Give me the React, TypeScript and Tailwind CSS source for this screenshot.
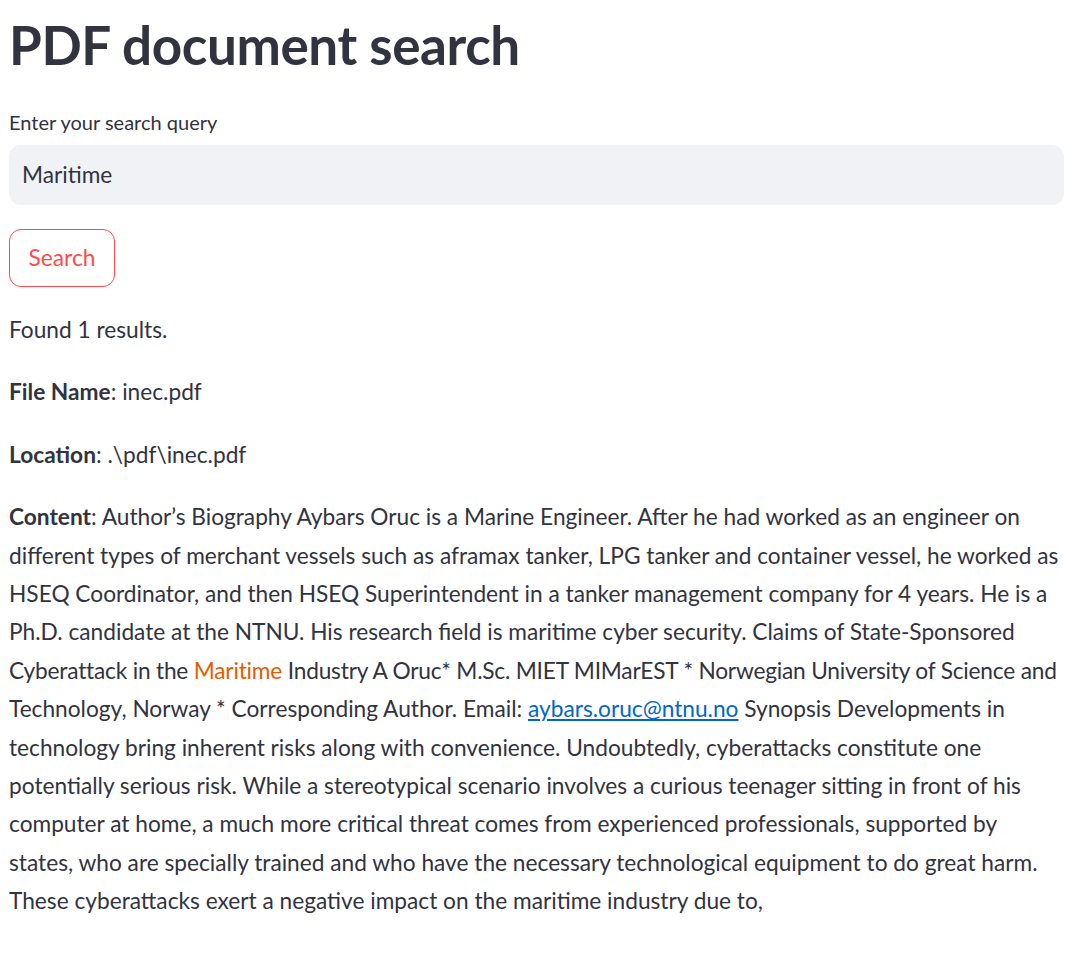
import React from 'react';

const lines: React.ReactNode[] = [
  <><b className="font-bold">Content</b>: Author’s Biography Aybars Oruc is a Marine Engineer. After he had worked as an engineer on</>,
  <>different types of merchant vessels such as aframax tanker, LPG tanker and container vessel, he worked as</>,
  <>HSEQ Coordinator, and then HSEQ Superintendent in a tanker management company for 4 years. He is a</>,
  <>Ph.D. candidate at the NTNU. His research field is maritime cyber security. Claims of State-Sponsored</>,
  <span className="tracking-[-0.2px]">Cyberattack in the <span className="text-[#e65c00]">Maritime</span> Industry A Oruc* M.Sc. MIET MIMarEST * Norwegian University of Science and</span>,
  <>Technology, Norway * Corresponding Author. Email: <a href="#" className="text-[#0068c9] underline">aybars.oruc@ntnu.no</a> Synopsis Developments in</>,
  <>technology bring inherent risks along with convenience. Undoubtedly, cyberattacks constitute one</>,
  <>potentially serious risk. While a stereotypical scenario involves a curious teenager sitting in front of his</>,
  <>computer at home, a much more critical threat comes from experienced professionals, supported by</>,
  <>states, who are specially trained and who have the necessary technological equipment to do great harm.</>,
  <>These cyberattacks exert a negative impact on the maritime industry due to,</>,
];

const App: React.FC = () => {
  return (
    <div className="min-h-screen w-full bg-white pl-[9px] pr-[1px] font-[Lato,sans-serif] text-[#31333f]">
      <h1 className="pt-[13px] text-[53px] font-bold leading-[64px] tracking-[-0.4px]">PDF document search</h1>

      <label className="mt-[30px] block text-[20px] leading-[30px]">Enter your search query</label>
      <div className="mt-[8px] flex h-[60px] items-center rounded-[12px] bg-[#f0f2f6] pl-[13px] text-[22.7px]">Maritime</div>

      <button className="mt-[24px] flex h-[58px] w-[106px] items-center justify-center rounded-[12px] border border-[#ff4b4b] bg-white text-[22.7px] text-[#ff4b4b]">
        Search
      </button>

      <div className="mt-[24px] text-[22.7px] leading-[38.4px]">
        <p className="mb-[24px]">Found 1 results.</p>
        <p className="mb-[24px]"><b className="font-bold">File Name</b>: inec.pdf</p>
        <p className="mb-[24px]"><b className="font-bold">Location</b>: .\pdf\inec.pdf</p>
        <p className="whitespace-nowrap">
          {lines.map((l, i) => (
            <React.Fragment key={i}>
              {l}
              {i < lines.length - 1 && <br />}
            </React.Fragment>
          ))}
        </p>
      </div>
    </div>
  );
};

export default App;
